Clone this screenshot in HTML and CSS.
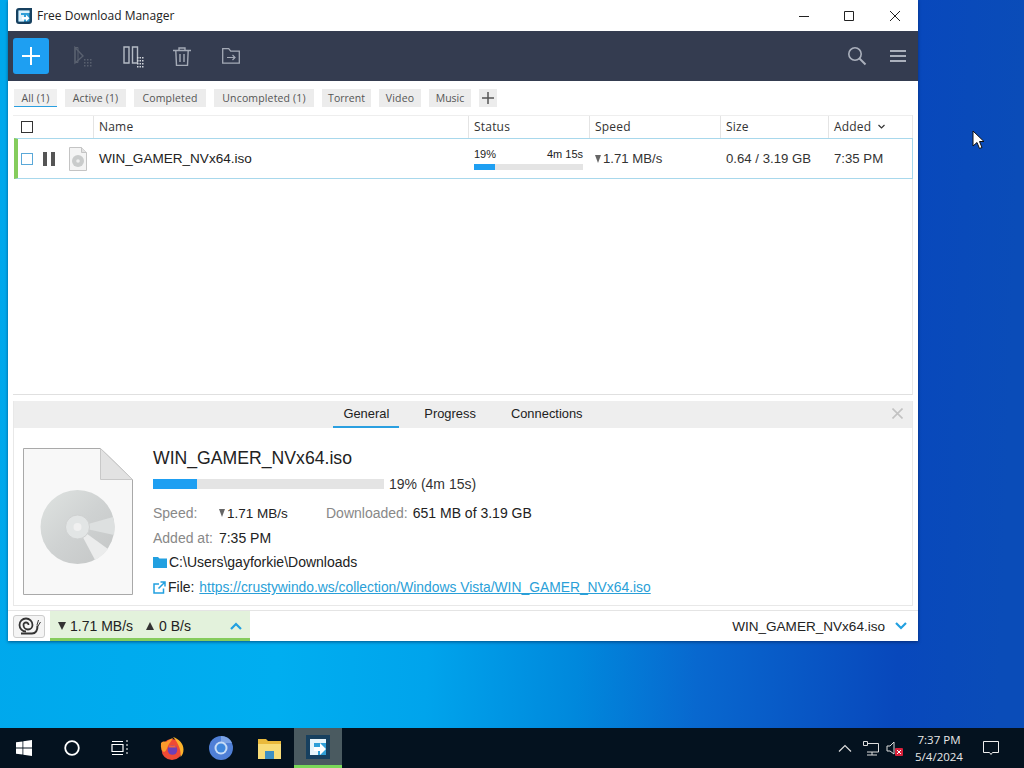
FILE: index.html
```html
<!DOCTYPE html>
<html lang="en">
<head>
    <meta charset="UTF-8">
    <meta name="viewport" content="width=device-width, initial-scale=1.0">
    <title>Free Download Manager</title>
    <link rel="stylesheet" href="styles.css">
</head>
<body>

<div class="desktop">
    <div class="window">
        <div class="titlebar">
            <svg class="app-logo" width="16" height="16" viewBox="0 0 16 16">
                <path d="M3 0h13v13a3 3 0 0 1-3 3H3a3 3 0 0 1-3-3V3a3 3 0 0 1 3-3z" fill="#17405f"/>
                <path d="M2.500 2.500h11v11h-11z" fill="#2f9fd8"/>
                <path d="M2.500 2.500h11v2.500h-8.500v2h3v6.500h-5.500z" fill="#dff1fa"/>
                <path d="M6 9h4V6.800l3.500 3.400-3.500 3.300V11.400H6z" fill="#fff"/>
            </svg>
            <span class="app-title">Free Download Manager</span>
            <div class="window-buttons">
                <svg width="12" height="12" viewBox="0 0 12 12"><path d="M2 6.500h10" stroke="#222" fill="none"/></svg>
                <svg width="12" height="12" viewBox="0 0 12 12"><path d="M1.500 1.500h9v9h-9z" stroke="#222" fill="none"/></svg>
                <svg width="12" height="12" viewBox="0 0 12 12"><path d="M1 1l10 10M11 1L1 11" stroke="#222" fill="none"/></svg>
            </div>
        </div>

        <div class="toolbar">
            <button class="add-btn" type="button">
                <svg width="20" height="20" viewBox="0 0 20 20"><path d="M10 1v18M1 10h18" stroke="#fff" stroke-width="2" fill="none"/></svg>
            </button>
            <svg class="tool tool-start" width="20" height="22" viewBox="0 0 20 22">
                <path d="M1 1.500v15.500l8-7z" fill="none" stroke="#59606f" stroke-width="1.400"/>
                <path d="M1 1.500h3v15H1z" fill="none" stroke="#59606f"/>
                <path d="M10 13h1.500v1.500H10zM13 13h1.500v1.500H13zM16 13h1.500v1.500H16zM10 16h1.500v1.500H10zM13 16h1.500v1.500H13zM16 16h1.500v1.500H16zM10 19h1.500v1.500H10zM13 19h1.500v1.500H13zM16 19h1.500v1.500H16z" fill="#59606f"/>
            </svg>
            <svg class="tool tool-pause" width="22" height="22" viewBox="0 0 22 22">
                <path d="M1 1h5v16H1zM9.500 1h5v16h-5z" fill="none" stroke="#b4bac4" stroke-width="1.400"/>
                <path d="M14 11h1.500v1.500H14zM16.500 11H18v1.500h-1.500zM19 11h1.500v1.500H19zM14 14h1.500v1.500H14zM16.500 14H18v1.500h-1.500zM19 14h1.500v1.500H19zM14 17h1.500v1.500H14zM16.500 17H18v1.500h-1.500zM19 17h1.500v1.500H19zM14 20h1.500v1.500H14zM16.500 20H18v1.500h-1.500zM19 20h1.500v1.500H19z" fill="#d0d4da"/>
            </svg>
            <svg class="tool tool-trash" width="18" height="19" viewBox="0 0 18 19">
                <path d="M0 3.500h18M6 3.500V1h6v2.500M2.800 3.500l.7 15h11l.7-15M7 7v8M11 7v8" fill="none" stroke="#a4aab6" stroke-width="1.400"/>
            </svg>
            <svg class="tool tool-folder" width="18" height="16" viewBox="0 0 18 16">
                <path d="M.7.700h6l2 2.500h8.600v12H.7z" fill="none" stroke="#a4aab6" stroke-width="1.300"/>
                <path d="M5 9.500h8M10.500 7l2.500 2.500-2.500 2.500" fill="none" stroke="#a4aab6" stroke-width="1.200"/>
            </svg>
            <div class="toolbar-right">
                <svg width="20" height="20" viewBox="0 0 20 20"><circle cx="8" cy="8" r="6.200" fill="none" stroke="#aab0bc" stroke-width="1.600"/><path d="M12.500 12.500l6 6" stroke="#aab0bc" stroke-width="2"/></svg>
                <svg width="16" height="14" viewBox="0 0 16 14"><path d="M0 2h16M0 7h16M0 12h16" stroke="#aab0bc" stroke-width="1.800"/></svg>
            </div>
        </div>

        <div class="filters">
            <span class="tag tag-all">All (1)</span>
            <span class="tag tag-act">Active (1)</span>
            <span class="tag tag-done">Completed</span>
            <span class="tag tag-undone">Uncompleted (1)</span>
            <span class="tag tag-torrent">Torrent</span>
            <span class="tag tag-video">Video</span>
            <span class="tag tag-music">Music</span>
            <span class="tag tag-plus">
                <svg width="12" height="12" viewBox="0 0 12 12"><path d="M6 0v12M0 6h12" stroke="#555" stroke-width="1.500"/></svg>
            </span>
        </div>

        <div class="list">
            <div class="list-head">
                <div class="cell cell-check"><span class="checkbox"></span></div>
                <div class="cell">Name</div>
                <div class="cell">Status</div>
                <div class="cell">Speed</div>
                <div class="cell">Size</div>
                <div class="cell">Added
                    <svg class="sort-arrow" width="7" height="5" viewBox="0 0 7 5"><path d="M.5 1l3 3 3-3" fill="none" stroke="#333" stroke-width="1.200"/></svg>
                </div>
            </div>
            <div class="list-row">
                <div class="row-controls">
                    <span class="checkbox checkbox-blue"></span>
                    <span class="pause-icon"></span>
                    <svg class="row-icon" width="18" height="24" viewBox="0 0 18 24">
                        <path d="M.5.500h12l5 5v18H.5z" fill="#f4f4f4" stroke="#c4c4c4"/>
                        <path d="M12.500.500v5h5" fill="#e2e2e2" stroke="#c4c4c4"/>
                        <circle cx="9" cy="14" r="6" fill="#c9cbcb"/>
                        <circle cx="9" cy="14" r="1.800" fill="#eee"/>
                    </svg>
                </div>
                <div class="row-name">WIN_GAMER_NVx64.iso</div>
                <div class="row-status">
                    <div class="status-text"><span>19%</span><span>4m 15s</span></div>
                    <div class="bar bar-small"><div class="bar-fill" style="width: 19%"></div></div>
                </div>
                <div class="row-cell"><span class="arrow-down"></span>1.71 MB/s</div>
                <div class="row-cell">0.64 / 3.19 GB</div>
                <div class="row-cell">7:35 PM</div>
            </div>
        </div>

        <div class="details">
            <div class="tabs">
                <span class="tab tab-current">General</span>
                <span class="tab">Progress</span>
                <span class="tab">Connections</span>
                <svg class="tabs-close" width="11" height="11" viewBox="0 0 11 11"><path d="M.5.500l10 10M10.500.500l-10 10" stroke="#c2c2c2" stroke-width="1.600"/></svg>
            </div>
            <div class="details-body">
                <svg class="big-icon" width="110" height="147" viewBox="0 0 110 147">
                    <defs>
                        <linearGradient id="disc" x1="0" y1="0" x2="1" y2="1">
                            <stop offset="0" stop-color="#dfe3e1"/>
                            <stop offset="0.500" stop-color="#cfd2d2"/>
                            <stop offset="1" stop-color="#c4c6c6"/>
                        </linearGradient>
                    </defs>
                    <path d="M.5.500h77l32 31v115H.5z" fill="#f8f8f8" stroke="#a9a9a9"/>
                    <path d="M77.500.500v31h32z" fill="#e2e2e2" stroke="#c8c8c8"/>
                    <circle cx="54.500" cy="79" r="37" fill="url(#disc)"/>
                    <path d="M54.500 79L90 69a37 37 0 0 1 1 18z" fill="#dde0e0"/>
                    <path d="M54.500 79L72 112a37 37 0 0 0 13-11z" fill="#ebecec"/>
                    <circle cx="54.500" cy="79" r="12" fill="#e2e5e5" stroke="#cfd1d1"/>
                    <circle cx="54.500" cy="79" r="4" fill="#f0f0f0"/>
                </svg>
                <div class="info">
                    <div class="info-title">WIN_GAMER_NVx64.iso</div>
                    <div class="info-progress">
                        <div class="bar bar-big"><div class="bar-fill" style="width: 19%"></div></div>
                        <span>19% (4m 15s)</span>
                    </div>
                    <div class="info-line info-line-first">
                        <span class="muted label-speed">Speed:</span>
                        <span class="speed-value"><span class="arrow-down"></span>1.71 MB/s</span>
                        <span class="muted label-downloaded">Downloaded:</span>
                        <span>651 MB of 3.19 GB</span>
                    </div>
                    <div class="info-line">
                        <span class="muted label-added">Added at:</span>
                        <span>7:35 PM</span>
                    </div>
                    <div class="info-line info-line-tight">
                        <svg width="14" height="12" viewBox="0 0 14 12"><path d="M0 1h5l1.500 1.500H14V12H0z" fill="#22a0e0"/></svg>
                        <span>C:\Users\gayforkie\Downloads</span>
                    </div>
                    <div class="info-line info-line-tight">
                        <svg width="13" height="13" viewBox="0 0 13 13"><path d="M10.500 7.500v4.500h-9.500V3h5M7.500 1H12v4.500M12 1L5.500 7.500" fill="none" stroke="#22a0e0" stroke-width="1.500"/></svg>
                        <span>File: <a class="file-link" href="#">https://crustywindo.ws/collection/Windows Vista/WIN_GAMER_NVx64.iso</a></span>
                    </div>
                </div>
            </div>
        </div>

        <div class="statusbar">
            <span class="snail-btn">
                <svg width="24" height="18" viewBox="0 0 24 18">
                    <path d="M9 14.500a6.500 6.500 0 1 1 6.500-6.500 4.500 4.500 0 1 1-9 0 2.500 2.500 0 1 1 5 0" fill="none" stroke="#333" stroke-width="1.800"/>
                    <path d="M4 16.500h11c3.500 0 5.500-3 5.500-8" fill="none" stroke="#333" stroke-width="2"/>
                    <path d="M20 8l1.500-5M21 9l2.500-4" stroke="#333"/>
                </svg>
            </span>
            <div class="speed-box">
                <span class="arrow-down arrow-dark"></span><span class="speed-num">1.71 MB/s</span>
                <span class="arrow-up"></span><span>0 B/s</span>
                <svg class="chevron-up" width="12" height="8" viewBox="0 0 12 8"><path d="M1 7l5-5 5 5" fill="none" stroke="#22a0e0" stroke-width="2.200"/></svg>
            </div>
            <div class="status-file">
                <span>WIN_GAMER_NVx64.iso</span>
                <svg width="12" height="8" viewBox="0 0 12 8"><path d="M1 1l5 5 5-5" fill="none" stroke="#22a0e0" stroke-width="2.200"/></svg>
            </div>
        </div>
    </div>

    <svg class="cursor" width="13" height="20" viewBox="0 0 13 20"><path d="M1 1v15l4-3.500 2.500 6 2.500-1-2.500-6H12z" fill="#fff" stroke="#111"/></svg>
</div>

<div class="taskbar">
    <div class="task-slot">
        <svg width="16" height="16" viewBox="0 0 16 16"><path d="M0 2.300l6.500-.9v6.200H0zM7.300 1.300L16 0v7.600H7.300zM0 8.400h6.500v6.200L0 13.700zM7.300 8.400H16V16l-8.700-1.200z" fill="#fff"/></svg>
    </div>
    <div class="task-slot">
        <svg width="16" height="16" viewBox="0 0 16 16"><circle cx="8" cy="8" r="6.800" fill="none" stroke="#fff" stroke-width="1.800"/></svg>
    </div>
    <div class="task-slot">
        <svg width="18" height="16" viewBox="0 0 18 16"><path d="M1 4.500h11v7H1zM1 1.500h11M1 14.500h11M15 1h2M15 5h2M15 9h2M15 13h2" fill="none" stroke="#fff" stroke-width="1.200"/></svg>
    </div>
    <div class="task-slot task-app task-app-first">
        <svg width="24" height="24" viewBox="0 0 24 24">
            <circle cx="12" cy="13.500" r="10.500" fill="#ef4a34"/>
            <path d="M13 1c6 2 10.500 6.500 10.500 12.500 0 3-1 5.500-3 7.500 1-6-2-14-7.500-20z" fill="#fdb32b"/>
            <path d="M1 7c-.5 5 .5 8 3 9 3-1 3-5 5-8 1.500-2 3-4 4-6-3 1-5 2-6.500 4C5 5.500 3 5 1 7z" fill="#fb9a2c"/>
            <circle cx="12.500" cy="14" r="4.800" fill="#6e3fb6"/>
            <path d="M9 9.500h6l1 2H9z" fill="#f2653c"/>
        </svg>
    </div>
    <div class="task-slot task-app">
        <svg width="24" height="24" viewBox="0 0 24 24">
            <circle cx="12" cy="12" r="12" fill="#4f7fd6"/>
            <path d="M12 0a12 12 0 0 1 11 7H12z" fill="#7ba3e6"/>
            <circle cx="12" cy="12" r="6.500" fill="#c7dcf6"/>
            <circle cx="12" cy="12" r="4.500" fill="#3f87dd"/>
        </svg>
    </div>
    <div class="task-slot task-app">
        <svg width="23" height="21" viewBox="0 0 23 21">
            <path d="M0 1h8l2 2h13v18H0z" fill="#e9b93c"/>
            <path d="M0 6h23v15H0z" fill="#f8dc78"/>
            <path d="M7 13h9v8H7z" fill="#3d8fc4"/>
        </svg>
    </div>
    <div class="task-slot task-slot-open">
        <svg width="24" height="24" viewBox="0 0 24 24">
            <path d="M0 0h24v24H0z" fill="#17405f"/>
            <path d="M4 4h16v16H4z" fill="#2f9fd8"/>
            <path d="M4 4h16v4H8v4h4v8H4z" fill="#e8f5fb"/>
            <path d="M8 12h6V8l6 6-6 6v-4H8z" fill="#fff"/>
        </svg>
    </div>
    <div class="tray">
        <svg class="tray-chevron" width="14" height="8" viewBox="0 0 14 8"><path d="M1 7.500l6-6 6 6" fill="none" stroke="#ddd" stroke-width="1.200"/></svg>
        <svg class="tray-net" width="16" height="15" viewBox="0 0 16 15"><path d="M4 2.500h11.500v8.500H4M9 11v3M4 14h10M.5.500h4v4h-4z" fill="none" stroke="#ddd"/></svg>
        <svg class="tray-sound" width="17" height="15" viewBox="0 0 17 15">
            <path d="M1 5h3l4-4v12L4 10H1z" fill="none" stroke="#ddd"/>
            <rect x="9" y="7" width="8" height="8" rx="1" fill="#d8203a"/>
            <path d="M11 9l4 4M15 9l-4 4" stroke="#fff"/>
        </svg>
        <div class="clock"><span>7:37 PM</span><span>5/4/2024</span></div>
        <svg width="16" height="15" viewBox="0 0 16 15"><path d="M.5.500h15v11H9.500L8 13.500 6.500 11.500H.5z" fill="none" stroke="#eee"/></svg>
    </div>
</div>

</body>
</html>
```

FILE: styles.css
```css
* {
    box-sizing: border-box;
}
body {
    margin: 0;
    width: 1024px;
    height: 768px;
    overflow: hidden;
    display: flex;
    flex-direction: column;
    font-family: "Liberation Sans", Arial, sans-serif;
    font-size: 14px;
    color: #222;
}
svg {
    display: block;
    flex: none;
}
.desktop {
    position: relative;
    height: 728px;
    background: linear-gradient(92deg, #00a8ec 0, #00aef0 300px, #00a4ec 450px, #0088dc 600px, #0868cf 720px, #0848bc 920px, #0a4cb8 1024px);
}
.window {
    position: absolute;
    left: 8px;
    top: 0;
    width: 910px;
    height: 641px;
    display: flex;
    flex-direction: column;
    background: white;
    box-shadow: 0 1px 3px rgba(0, 20, 60, 0.55);
}
.cursor {
    position: absolute;
    left: 972px;
    top: 130px;
}

/* title bar */
.titlebar {
    height: 31px;
    display: flex;
    align-items: center;
    padding-left: 8px;
}
.app-title {
    margin-left: 5px;
    font-family: "Open Sans", sans-serif;
    font-size: 12px;
}
.window-buttons {
    margin-left: auto;
    display: flex;
    gap: 34px;
    padding-right: 17px;
}

/* toolbar */
.toolbar {
    height: 50px;
    display: flex;
    align-items: center;
    padding-left: 5px;
    background-color: #343c50;
}
.add-btn {
    width: 36px;
    height: 36px;
    padding: 0;
    border: none;
    border-radius: 3px;
    display: flex;
    align-items: center;
    justify-content: center;
    background-color: #1e9ff2;
}
.tool {
    margin-top: 2px;
}
.tool-start {
    margin-left: 25px;
}
.tool-pause {
    margin-left: 29px;
}
.tool-trash {
    margin-left: 28px;
    margin-top: 0;
}
.tool-folder {
    margin-left: 31px;
    margin-top: 0;
}
.toolbar-right {
    margin-left: auto;
    display: flex;
    align-items: center;
    gap: 23px;
    padding-right: 12px;
}

/* filter tags */
.filters {
    height: 34px;
    display: flex;
    align-items: center;
    gap: 8px;
    padding-left: 6px;
}
.tag {
    height: 18px;
    display: flex;
    align-items: center;
    justify-content: center;
    font-family: "Open Sans", sans-serif;
    font-size: 10.5px;
    letter-spacing: 0.15px;
    color: #555;
    background-color: #ececec;
}
.tag-all {
    width: 43px;
    background-color: #f0f0f0;
    border-bottom: 1px solid #2a9fe0;
}
.tag-act {
    width: 61px;
}
.tag-done {
    width: 72px;
}
.tag-undone {
    width: 100px;
}
.tag-torrent {
    width: 49px;
    letter-spacing: 0;
}
.tag-video {
    width: 42px;
}
.tag-music {
    width: 42px;
    letter-spacing: 0;
}
.tag-plus {
    width: 18px;
}

/* download list */
.list {
    height: 280px;
    margin: 0 5px;
    border-right: 1px solid #e8e8e8;
    border-bottom: 1px solid #e0e0e0;
    flex: none;
}
.list-head {
    height: 23px;
    display: grid;
    grid-template-columns: 80px 375px 121px 131px 108px 1fr;
    border-top: 1px solid #eee;
}
.cell {
    display: flex;
    align-items: center;
    padding: 0 0 2px 5px;
    border-left: 1px solid #e4e4e4;
    font-family: "Open Sans", sans-serif;
    font-size: 12px;
    letter-spacing: 0.2px;
    color: #333;
}
.cell-check {
    padding: 0 0 0 8px;
    border-left: none;
}
.checkbox {
    width: 12px;
    height: 12px;
    border: 1.5px solid #333;
    background: white;
    display: block;
}
.checkbox-blue {
    border: 1px solid #5aa8d8;
}
.sort-arrow {
    margin-left: 7px;
}
.list-row {
    height: 41px;
    display: grid;
    grid-template-columns: 75px 375px 121px 131px 108px 1fr;
    align-items: center;
    border: 1px solid #a8d8ec;
    border-left: 4px solid #85cc5c;
    margin-left: 1px;
    margin-right: -1px;
}
.row-controls {
    display: flex;
    align-items: center;
    padding-left: 3px;
}
.pause-icon {
    width: 12px;
    height: 14px;
    margin-left: 10px;
    border-left: 4px solid #555;
    border-right: 4px solid #555;
}
.row-icon {
    margin-left: 14px;
}
.row-name {
    padding-left: 6px;
    font-size: 13.55px;
}
.row-status {
    padding: 0 6px;
}
.status-text {
    display: flex;
    justify-content: space-between;
    font-size: 11px;
    margin-bottom: 4px;
}
.bar {
    background-color: #e4e4e4;
}
.bar-fill {
    height: 100%;
    background-color: #1e9ff2;
}
.bar-small {
    height: 6px;
}
.bar-big {
    width: 231px;
    height: 10px;
}
.row-cell {
    padding-left: 6px;
    font-size: 13.2px;
    color: #333;
    display: flex;
    align-items: center;
}
.arrow-down {
    width: 0;
    height: 0;
    border-left: 3.5px solid transparent;
    border-right: 3.5px solid transparent;
    border-top: 8px solid #666;
    margin-right: 2px;
    display: inline-block;
}
.arrow-dark {
    border-top-color: #333;
    border-left-width: 4px;
    border-right-width: 4px;
}
.arrow-up {
    width: 0;
    height: 0;
    border-left: 4px solid transparent;
    border-right: 4px solid transparent;
    border-bottom: 8px solid #333;
    display: inline-block;
    margin-left: 13px;
    margin-right: 5px;
}

/* details */
.details {
    margin: 6px 5px 0;
    height: 205px;
    flex: none;
    border: 1px solid #e8e8e8;
    border-top: none;
}
.tabs {
    position: relative;
    height: 27px;
    display: flex;
    justify-content: center;
    gap: 15px;
    background-color: #eeeeee;
}
.tab {
    padding: 0 10px 2px;
    display: flex;
    align-items: center;
    font-size: 12.9px;
    color: #222;
    white-space: nowrap;
}
.tab-current {
    padding-bottom: 0;
    border-bottom: 2px solid #2a9fe0;
}
.tabs-close {
    position: absolute;
    right: 9px;
    top: 7px;
}
.details-body {
    display: flex;
    padding: 20px 0 0 9px;
}
.info {
    margin-left: 20px;
}
.info-title {
    font-size: 17.65px;
    line-height: 20px;
}
.info-progress {
    display: flex;
    align-items: center;
    gap: 5px;
    margin-top: 6px;
    font-size: 14px;
    line-height: 20px;
    color: #333;
}
.info-line {
    display: flex;
    align-items: center;
    height: 24.6px;
    font-size: 14px;
    white-space: pre;
}
.info-line-first {
    margin-top: 7px;
}
.info-line-tight svg {
    margin-right: 2px;
}
.muted {
    color: #888;
}
.label-speed {
    width: 66px;
}
.speed-value {
    width: 107px;
    display: flex;
    align-items: center;
    font-size: 13.5px;
}
.label-downloaded {
    margin-right: 5px;
}
.label-added {
    margin-right: 6px;
}
.file-link {
    margin-left: 1px;
    font-size: 13.85px;
    color: #2a9fd8;
}

/* status bar */
.statusbar {
    margin-top: 4px;
    flex: 1;
    display: flex;
    align-items: center;
    border-top: 1px solid #e4e4e4;
    padding-left: 5px;
}
.snail-btn {
    width: 32px;
    height: 23px;
    border: 1px solid #ccc;
    border-radius: 3px;
    background-color: #f4f4f4;
    display: flex;
    align-items: center;
    justify-content: center;
}
.speed-box {
    width: 200px;
    height: 100%;
    margin-left: 5px;
    display: flex;
    align-items: center;
    padding-left: 8px;
    padding-top: 2px;
    background-color: #e3f2dc;
    border-bottom: 3px solid #85cc5c;
}
.speed-num {
    margin-left: 2px;
}
.chevron-up {
    margin-left: auto;
    margin-right: 8px;
}
.status-file {
    margin-left: auto;
    display: flex;
    align-items: center;
    gap: 10px;
    padding-right: 11px;
    font-size: 13.55px;
}

/* taskbar */
.taskbar {
    height: 40px;
    display: flex;
    align-items: center;
    background-color: #04121f;
}
.task-slot {
    width: 48px;
    height: 40px;
    display: flex;
    align-items: center;
    justify-content: center;
    flex: none;
}
.task-app {
    width: 49px;
}
.task-app-first {
    margin-left: 3px;
}
.task-slot-open {
    background-color: #4a5a60;
    border-bottom: 3px solid #7ad858;
}
.tray {
    margin-left: auto;
    display: flex;
    align-items: center;
    color: #e8e8e8;
    padding-right: 25px;
}
.tray-chevron {
    margin-right: 11px;
}
.tray-net {
    margin-right: 7px;
}
.tray-sound {
    margin-right: 11px;
}
.clock {
    display: flex;
    flex-direction: column;
    align-items: center;
    width: 50px;
    font-family: "Open Sans", sans-serif;
    font-size: 11.5px;
    line-height: 17px;
    margin-right: 19px;
}
```
